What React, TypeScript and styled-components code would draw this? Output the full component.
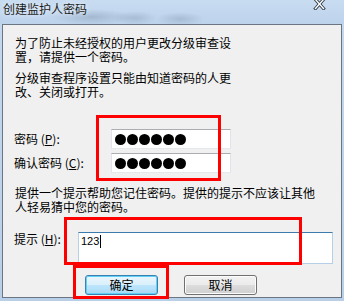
import React from 'react';
import styled, { createGlobalStyle } from 'styled-components';

const GlobalStyle = createGlobalStyle`
  html, body {
    margin: 0;
    padding: 0;
    background: #bcd2ea;
  }
  body {
    font-family: "Noto Sans CJK SC", "Noto Sans", sans-serif;
    color: #000;
  }
`;

const Window = styled.div`
  position: relative;
  width: 344px;
  height: 301px;
  overflow: hidden;
  display: flex;
  flex-direction: column;
  background: linear-gradient(#c4d9ef, #b9cfe8);
`;

const TitleBar = styled.div`
  height: 24px;
  flex-shrink: 0;
  display: flex;
  align-items: flex-start;
  padding-left: 3px;
  background:
    radial-gradient(ellipse 40px 8px at 92px 17px, rgba(105, 125, 150, 0.32), transparent),
    radial-gradient(ellipse 22px 7px at 135px 18px, rgba(105, 125, 150, 0.28), transparent),
    radial-gradient(ellipse 24px 7px at 180px 19px, rgba(105, 125, 150, 0.28), transparent),
    linear-gradient(#c8dcf1, #bdd3ec);
`;

const Title = styled.div`
  font-size: 12px;
  line-height: 16px;
  margin-top: 1px;
  color: #1c1c1c;
  text-shadow: 0 0 5px rgba(255, 255, 255, 0.9);
  white-space: nowrap;
`;

const CloseIcon = styled.svg`
  margin-left: auto;
  margin-right: 18px;
  margin-top: -2px;
  flex-shrink: 0;
`;

const Panel = styled.div`
  margin: 0 2px;
  width: 340px;
  height: 274px;
  box-sizing: border-box;
  border: 1px solid #6a7684;
  background: #f0f0f0;
  padding: 11px 0 0 12px;
  display: flex;
  flex-direction: column;
`;

const Paragraph = styled.p<{ $top?: number }>`
  margin: ${p => p.$top ?? 0}px 0 0 0;
  font-size: 12px;
  line-height: 14px;
  white-space: nowrap;
`;

const FieldRow = styled.div<{ $top: number; $align?: string }>`
  display: flex;
  align-items: ${p => p.$align ?? 'center'};
  margin-top: ${p => p.$top}px;
`;

const Label = styled.label<{ $width: number }>`
  width: ${p => p.$width}px;
  flex-shrink: 0;
  font-size: 12px;
  line-height: 14px;
  white-space: nowrap;
  margin-left: -1px;
`;

const PasswordBox = styled.div`
  width: 120px;
  height: 20px;
  box-sizing: border-box;
  border: 1px solid;
  border-color: #abadb3 #e2e3ea #e3e9ef #e2e3ea;
  background: #fff;
  display: flex;
  align-items: center;
  gap: 1px;
  padding-left: 3px;
  margin-left: 1px;
`;

const Dot = styled.span`
  width: 11px;
  height: 11px;
  border-radius: 50%;
  background: #000;
`;

const HintBox = styled.div`
  width: 255px;
  height: 32px;
  box-sizing: border-box;
  border: 1px solid;
  border-color: #3d7bad #b5cfe7 #b5cfe7 #b5cfe7;
  background: #fff;
  padding: 2px 0 0 2px;
  font-family: "Liberation Sans", Arial, sans-serif;
  font-size: 11px;
  line-height: 13px;
  margin-left: 1px;
`;

const Caret = styled.span`
  display: inline-block;
  width: 1px;
  height: 13px;
  background: #000;
  vertical-align: top;
  margin-left: 1px;
`;

const ButtonRow = styled.div`
  display: flex;
  gap: 26px;
  margin-top: 11px;
  padding-left: 70px;
`;

const Button = styled.button<{ $primary?: boolean }>`
  width: 73px;
  height: 20px;
  box-sizing: border-box;
  padding: 0;
  border-radius: 3px;
  font-family: "Noto Sans CJK SC", sans-serif;
  font-size: 12px;
  line-height: 16px;
  color: #000;
  border: 1px solid ${p => (p.$primary ? '#3c7fb1' : '#707070')};
  background: ${p =>
    p.$primary
      ? 'linear-gradient(#eaf6fd 0%, #d9f0fc 50%, #bee6fd 51%, #a7d9f5 100%)'
      : 'linear-gradient(#f2f2f2 0%, #ebebeb 50%, #dddddd 51%, #cfcfcf 100%)'};
  box-shadow: inset 0 0 0 1px ${p => (p.$primary ? '#5fd0f6' : '#fcfcfc')};
`;

const Highlight = styled.div<{ $x: number; $y: number; $w: number; $h: number }>`
  position: absolute;
  left: ${p => p.$x}px;
  top: ${p => p.$y}px;
  width: ${p => p.$w}px;
  height: ${p => p.$h}px;
  box-sizing: border-box;
  border: 3px solid #ff0000;
  pointer-events: none;
`;

const Dots: React.FC<{ count: number }> = ({ count }) => (
  <PasswordBox>
    {Array.from({ length: count }).map((_, i) => (
      <Dot key={i} />
    ))}
  </PasswordBox>
);

export default function App() {
  return (
    <>
      <GlobalStyle />
      <Window>
        <TitleBar>
          <Title>创建监护人密码</Title>
          <CloseIcon width="13" height="12" viewBox="0 0 13 12">
            <path d="M2.5 1.5 L10.5 10.5 M10.5 1.5 L2.5 10.5" stroke="#2f3a46" strokeWidth="3.2" strokeLinecap="square" />
            <path d="M2.5 1.5 L10.5 10.5 M10.5 1.5 L2.5 10.5" stroke="#ffffff" strokeWidth="1.4" strokeLinecap="square" />
          </CloseIcon>
        </TitleBar>
        <Panel>
          <Paragraph>
            为了防止未经授权的用户更改分级审查设
            <br />
            置，请提供一个密码。
          </Paragraph>
          <Paragraph $top={7}>
            分级审查程序设置只能由知道密码的人更
            <br />
            改、关闭或打开。
          </Paragraph>
          <FieldRow $top={30}>
            <Label $width={96}>
              密码 (<u>P</u>):
            </Label>
            <Dots count={6} />
          </FieldRow>
          <FieldRow $top={4}>
            <Label $width={96}>
              确认密码 (<u>C</u>):
            </Label>
            <Dots count={6} />
          </FieldRow>
          <Paragraph $top={13}>
            提供一个提示帮助您记住密码。提供的提示不应该让其他
            <br />
            人轻易猜中您的密码。
          </Paragraph>
          <FieldRow $top={18} $align="flex-start">
            <Label $width={63}>
              提示 (<u>H</u>):
            </Label>
            <HintBox>
              123
              <Caret />
            </HintBox>
          </FieldRow>
          <ButtonRow>
            <Button $primary>确定</Button>
            <Button>取消</Button>
          </ButtonRow>
        </Panel>
        <Highlight $x={96} $y={115} $w={125} $h={66} />
        <Highlight $x={64} $y={217} $w={238} $h={48} />
        <Highlight $x={73} $y={265} $w={96} $h={34} />
      </Window>
    </>
  );
}
